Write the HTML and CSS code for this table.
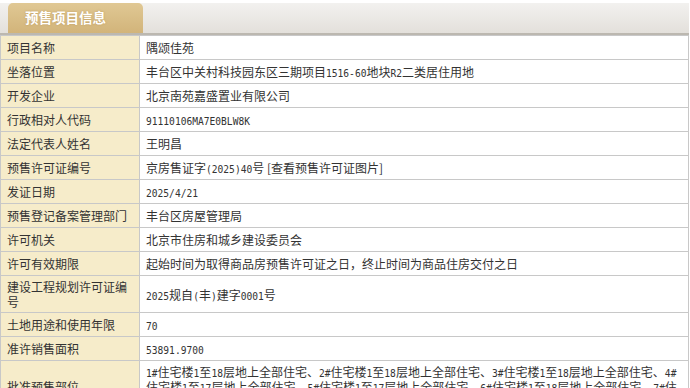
FILE: index.html
```html
<!DOCTYPE html>
<html lang="zh-CN">
<head>
<meta charset="utf-8">
<title>预售项目信息</title>
<link rel="stylesheet" href="styles.css">
</head>
<body>
<div class="panel">
  <div class="tabbar">
    <div class="tab">预售项目信息</div>
  </div>
  <table class="info">
    <tr><th>项目名称</th><td>隅颂佳苑</td></tr>
    <tr><th>坐落位置</th><td>丰台区中关村科技园东区三期项目<span class="a">1516-60</span>地块<span class="a">R2</span>二类居住用地</td></tr>
    <tr><th>开发企业</th><td>北京南苑嘉盛置业有限公司</td></tr>
    <tr><th>行政相对人代码</th><td><span class="a">91110106MA7E0BLW8K</span></td></tr>
    <tr><th>法定代表人姓名</th><td>王明昌</td></tr>
    <tr><th>预售许可证编号</th><td>京房售证字<span class="a">(2025)40</span>号 <span class="link">[查看预售许可证图片]</span></td></tr>
    <tr><th>发证日期</th><td><span class="a">2025/4/21</span></td></tr>
    <tr><th>预售登记备案管理部门</th><td>丰台区房屋管理局</td></tr>
    <tr><th>许可机关</th><td>北京市住房和城乡建设委员会</td></tr>
    <tr><th>许可有效期限</th><td>起始时间为取得商品房预售许可证之日，终止时间为商品住房交付之日</td></tr>
    <tr><th>建设工程规划许可证编号</th><td><span class="a">2025</span>规自<span class="a">(</span>丰<span class="a">)</span>建字<span class="a">0001</span>号</td></tr>
    <tr><th>土地用途和使用年限</th><td><span class="a">70</span></td></tr>
    <tr><th>准许销售面积</th><td><span class="a">53891.9700</span></td></tr>
    <tr><th>批准预售部位</th><td><span class="a">1#</span>住宅楼<span class="a">1</span>至<span class="a">18</span>层地上全部住宅、<span class="a">2#</span>住宅楼<span class="a">1</span>至<span class="a">18</span>层地上全部住宅、<span class="a">3#</span>住宅楼<span class="a">1</span>至<span class="a">18</span>层地上全部住宅、<span class="a">4#</span>住宅楼<span class="a">1</span>至<span class="a">17</span>层地上全部住宅、<span class="a">5#</span>住宅楼<span class="a">1</span>至<span class="a">17</span>层地上全部住宅、<span class="a">6#</span>住宅楼<span class="a">1</span>至<span class="a">18</span>层地上全部住宅、<span class="a">7#</span>住宅楼<span class="a">1</span>至<span class="a">18</span>层地上全部住宅</td></tr>
  </table>
</div>
</body>
</html>
```
FILE: styles.css
```css
html, body {
  margin: 0;
  padding: 0;
  background: #ffffff;
}

body {
  font-family: "Noto Sans CJK SC", "Noto Sans", sans-serif;
  font-size: 12px;
  line-height: 15px;
  color: #333333;
  overflow: hidden;
}

.panel {
  width: 689px;
  padding-top: 3px;
}

.tabbar {
  height: 30px;
  display: flex;
  align-items: flex-end;
  padding-left: 8px;
  background: linear-gradient(#f2f1ef, #e3e0db);
  border-bottom: 2px solid #bcb8b0;
}

.tab {
  width: 135px;
  height: 30px;
  box-sizing: border-box;
  padding-left: 17px;
  line-height: 29px;
  border-radius: 5px 5px 0 0;
  background: linear-gradient(#e0c894, #d2b47a);
  color: #ffffff;
  font-weight: bold;
  font-size: 13.5px;
  text-shadow: 0 0 2px rgba(170, 130, 60, 0.6);
}

.info {
  width: 689px;
  border-collapse: collapse;
  table-layout: fixed;
}

.info tr {
  height: 24px;
}

.info th,
.info td {
  border: 1px solid #c8c8c8;
  padding: 3px 6px;
  line-height: 15px;
  text-align: left;
  font-weight: normal;
  vertical-align: middle;
}

.info th {
  width: 126px;
  background: #f6ecca;
  color: #333333;
}

.info td {
  background: #ffffff;
  padding-right: 4px;
}

.a {
  font-family: "DejaVu Sans Mono", monospace;
  font-size: 9.6px;
  line-height: 1;
}

.link {
  color: #333333;
}
```
